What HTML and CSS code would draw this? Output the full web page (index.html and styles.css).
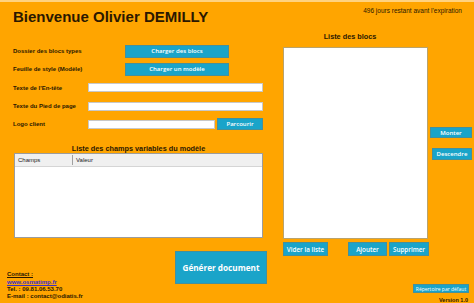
FILE: index.html
```html
<!DOCTYPE html>
<html lang="fr">
<head>
  <meta charset="UTF-8">
  <title>Générateur de documents</title>
  <link rel="stylesheet" href="styles.css">
</head>
<body>

<header class="top">
  <h1>Bienvenue Olivier DEMILLY</h1>
  <span class="expiry">496 jours restant avant l'expiration</span>
</header>

<div class="main">
  <div class="left">
    <div class="form">
      <label class="label">Dossier des blocs types</label>
      <div><button class="btn wide">Charger des blocs</button></div>

      <label class="label">Feuille de style (Modèle)</label>
      <div><button class="btn wide">Charger un modèle</button></div>

      <label class="label">Texte de l'En-tête</label>
      <div><input class="field" type="text"></div>

      <label class="label">Texte du Pied de page</label>
      <div><input class="field" type="text"></div>

      <label class="label">Logo client</label>
      <div class="logo-row">
        <input class="field short" type="text">
        <button class="btn browse">Parcourir</button>
      </div>
    </div>

    <h2 class="section">Liste des champs variables du modèle</h2>
    <div class="table">
      <div class="thead">
        <span>Champs</span>
        <span>Valeur</span>
      </div>
    </div>

    <div class="bottom">
      <div class="contact">
        <u>Contact :</u><br>
        <a href="#">www.osmatimp.fr</a><br>
        Tel. : 09.81.06.53.70<br>
        E-mail : contact@odiatis.fr
      </div>
      <button class="btn generate">Générer document</button>
    </div>
  </div>

  <div class="right">
    <h2 class="section blocs-title">Liste des blocs</h2>
    <div class="blocs">
      <div class="listbox"></div>
      <div class="side">
        <button class="btn up">Monter</button>
        <button class="btn down">Descendre</button>
      </div>
    </div>
    <div class="actions">
      <button class="btn clear">Vider la liste</button>
      <button class="btn add">Ajouter</button>
      <button class="btn remove">Supprimer</button>
    </div>
    <button class="btn repertoire">Répertoire par défaut</button>
    <div class="version">Version 1.0</div>
  </div>
</div>

</body>
</html>
```

FILE: styles.css
```css
html, body {
  height: 100%;
  overflow: hidden;
}

body {
  margin: 0;
  background: #ffa500;
  border-top: 2px solid #ffd27f;
  box-sizing: border-box;
  font-family: 'Liberation Sans', Arial, sans-serif;
  color: #2b1800;
}

.top {
  display: flex;
  justify-content: space-between;
  align-items: flex-start;
  height: 23px;
  padding: 6px 12px 0 13px;
  box-sizing: border-box;
}

h1 {
  margin: 0;
  font-size: 15px;
  line-height: 17px;
  font-weight: bold;
}

.expiry {
  font-size: 6.5px;
  line-height: 6px;
}

.main {
  display: flex;
  gap: 19px;
}

.left {
  width: 251px;
  padding-left: 13px;
  padding-top: 17px;
}

.form {
  display: grid;
  grid-template-columns: 75px 1fr;
  grid-auto-rows: 18.3px;
  align-items: center;
}

.form > div {
  display: flex;
  align-items: center;
}

.label {
  font-size: 6px;
  font-weight: bold;
}

.btn {
  background: #1aa4c9;
  border: 1px solid #46909a;
  color: #fff;
  font-family: 'Open Sans', 'Liberation Sans', sans-serif;
  font-weight: 600;
  font-size: 6px;
  padding: 0;
  box-sizing: border-box;
  white-space: nowrap;
  overflow: hidden;
  cursor: pointer;
}

.btn.wide {
  width: 104px;
  height: 13px;
  margin-left: 37px;
}

.field {
  width: 175px;
  height: 9px;
  border: 1px solid #c8c8c8;
  background: #fff;
  box-sizing: border-box;
  padding: 0;
  margin: 0;
}

.logo-row {
  gap: 2px;
}

.field.short {
  width: 127px;
}

.btn.browse {
  width: 46px;
  height: 12px;
}

.section {
  margin: 11px 0 0;
  font-size: 7.3px;
  line-height: 9px;
  text-align: center;
  font-weight: bold;
}

.table {
  margin-left: 1px;
  width: 249px;
  height: 85px;
  background: #fff;
  border: 1px solid #9c9c9c;
  box-sizing: border-box;
}

.thead {
  display: flex;
  align-items: center;
  height: 12px;
  background: #f0f0f0;
  border-bottom: 1px solid #d5d5d5;
  font-size: 6px;
  color: #222;
}

.thead span {
  padding-left: 3px;
}

.thead span:first-child {
  width: 54px;
  border-right: 1px solid #a0a0a0;
  line-height: 10px;
}

.bottom {
  display: flex;
  justify-content: space-between;
  align-items: flex-start;
  margin: 13px -3px 0 -6px;
}

.contact {
  margin-top: 20px;
  font-size: 6px;
  line-height: 7.3px;
  font-weight: bold;
}

.contact a {
  color: #3b2fc4;
}

.btn.generate {
  width: 92px;
  height: 33px;
  font-size: 8.2px;
  font-weight: 700;
}

.right {
  display: flex;
  flex-direction: column;
  width: 191px;
  padding-top: 7px;
}

.blocs-title {
  margin: 0;
  width: 134px;
}

.blocs {
  display: flex;
  margin-top: 6px;
}

.listbox {
  width: 145px;
  height: 192px;
  background: #fff;
  border: 1px solid #b9a36c;
  box-sizing: border-box;
}

.side {
  display: flex;
  flex-direction: column;
  align-items: flex-end;
  width: 44px;
  padding-top: 80px;
  gap: 10px;
}

.btn.up {
  width: 42px;
  height: 11px;
}

.btn.down {
  width: 40px;
  height: 12px;
}

.actions {
  display: flex;
  margin-top: 3px;
}

.actions .btn {
  height: 14px;
  font-size: 6.3px;
}

.btn.clear { width: 45px; }
.btn.add { width: 39px; margin-left: 20px; }
.btn.remove { width: 40px; margin-left: 2px; }

.btn.repertoire {
  align-self: flex-end;
  width: 56px;
  height: 9px;
  margin: 28px 5px 0 0;
  font-size: 5px;
  font-weight: 400;
}

.version {
  align-self: flex-end;
  margin: 4px 6px 0 0;
  font-size: 5.5px;
  line-height: 7px;
  font-weight: bold;
}
```
